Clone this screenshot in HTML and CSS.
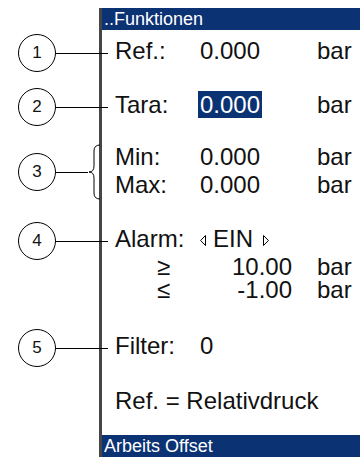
FILE: index.html
```html
<!DOCTYPE html>
<html lang="de">
<head>
  <meta charset="UTF-8">
  <meta name="viewport" content="width=device-width, initial-scale=1.0">
  <title>Arbeits Offset</title>
  <link rel="stylesheet" href="styles.css">
</head>
<body>
  <div class="figure">
    <div class="row">
      <div class="mark"></div>
      <div class="cell bar-title">..Funktionen</div>
    </div>

    <div class="row row-ref">
      <div class="mark"><span class="num">1</span><span class="lead"></span></div>
      <div class="cell">
        <div class="line"><span>Ref.:</span><span>0.000</span><span>bar</span></div>
      </div>
    </div>

    <div class="row row-tara">
      <div class="mark"><span class="num">2</span><span class="lead"></span></div>
      <div class="cell">
        <div class="line"><span>Tara:</span><span><span class="selected">0.000</span></span><span>bar</span></div>
      </div>
    </div>

    <div class="row row-range">
      <div class="mark">
        <span class="num">3</span><span class="lead short"></span>
        <svg class="brace" width="12" height="56" viewBox="0 0 12 56">
          <path d="M12 1 Q6 1 6 7 L6 22 Q6 28 1 28 Q6 28 6 34 L6 49 Q6 55 12 55" fill="none" stroke="#000" stroke-width="1"/>
        </svg>
      </div>
      <div class="cell">
        <div class="line"><span>Min:</span><span>0.000</span><span>bar</span></div>
        <div class="line"><span>Max:</span><span>0.000</span><span>bar</span></div>
      </div>
    </div>

    <div class="row row-alarm">
      <div class="mark"><span class="num">4</span><span class="lead"></span></div>
      <div class="cell">
        <div class="line">
          <span>Alarm:</span>
          <span class="toggle"><svg width="6" height="11" viewBox="0 0 6 11"><polygon points="5.5,0.5 5.5,10.5 0.6,5.5" fill="none" stroke="#000" stroke-width="1"/></svg><span class="state">EIN</span><svg width="6" height="11" viewBox="0 0 6 11"><polygon points="0.5,0.5 0.5,10.5 5.4,5.5" fill="none" stroke="#000" stroke-width="1"/></svg></span>
        </div>
        <div class="limit first"><span>&ge;</span><span class="val">10.00</span><span class="unit">bar</span></div>
        <div class="limit"><span>&le;</span><span class="val">-1.00</span><span class="unit">bar</span></div>
      </div>
    </div>

    <div class="row row-filter">
      <div class="mark"><span class="num">5</span><span class="lead"></span></div>
      <div class="cell">
        <div class="line"><span>Filter:</span><span>0</span></div>
      </div>
    </div>

    <div class="row row-note">
      <div class="mark"></div>
      <div class="cell">
        <div class="note">Ref. = Relativdruck</div>
      </div>
    </div>

    <div class="row">
      <div class="mark"></div>
      <div class="cell bar-title">Arbeits Offset</div>
    </div>
  </div>
</body>
</html>
```

FILE: styles.css
```css
/* General Styling */
body {
  margin: 0;
  background-color: #fff;
  color: #111;
  font-family: "Liberation Sans", Arial, sans-serif;
}

.figure {
  padding-top: 8px;
}

.row {
  display: flex;
  align-items: center;
}

/* callout column */
.mark {
  width: 99px;
  flex: none;
  display: flex;
  align-items: center;
  position: relative;
  z-index: 1;
}

.num {
  width: 36px;
  height: 36px;
  margin-left: 18px;
  border: 1px solid #000;
  border-radius: 50%;
  display: flex;
  align-items: center;
  justify-content: center;
  font-size: 17px;
  flex: none;
}

.lead {
  width: 52px;
  height: 1px;
  background-color: #000;
  flex: none;
}

.lead.short {
  width: 32px;
}

.brace {
  flex: none;
  display: block;
}

/* device screen */
.cell {
  flex: 1;
  align-self: stretch;
  border-left: 3px solid #464646;
  background-color: #fff;
  padding-left: 13px;
  font-size: 24px;
}

.bar-title {
  height: 22px;
  line-height: 22px;
  padding-left: 2px;
  background-color: #0b3273;
  color: #fff;
  font-size: 18px;
}

.line {
  display: grid;
  grid-template-columns: 85px 117px auto;
  line-height: 28px;
}

.selected {
  background-color: #0b3273;
  color: #fff;
  padding: 0 2px;
  margin-left: -2px;
}

.toggle {
  display: flex;
  align-items: center;
}

.toggle svg {
  display: block;
  margin-top: 2px;
}

.state {
  margin: 0 10px 0 7px;
}

.limit {
  display: grid;
  grid-template-columns: 20px 115px auto;
  padding-left: 42px;
  line-height: 23px;
}

.limit.first {
  margin-top: 2px;
}

.val {
  text-align: right;
}

.unit {
  padding-left: 25px;
}

.note {
  line-height: 28px;
}

/* row spacing */
.row-ref .cell {
  padding-top: 7px;
  padding-bottom: 11px;
}

.row-tara .cell {
  padding-top: 15px;
  padding-bottom: 19px;
}

.row-range .cell {
  padding-top: 5px;
  padding-bottom: 7px;
}

.row-alarm {
  align-items: flex-start;
}

.row-alarm .mark {
  margin-top: 16px;
}

.row-alarm .cell {
  padding-top: 19px;
  padding-bottom: 17px;
}

.row-filter .cell {
  padding-top: 14px;
  padding-bottom: 18px;
}

.row-note .cell {
  padding-top: 9px;
  padding-bottom: 20px;
}
```
